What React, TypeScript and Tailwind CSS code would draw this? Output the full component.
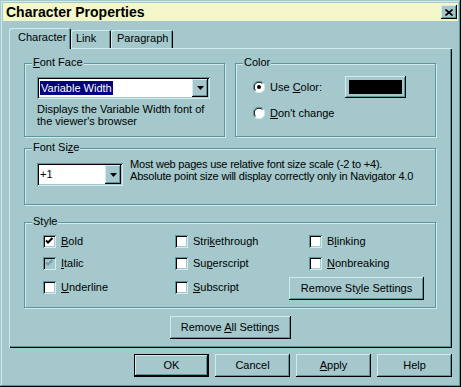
import type { ReactNode } from 'react'

// win95 bevels, teal scheme
const raised = 'bg-[#a4c8cc] shadow-[inset_-1px_-1px_#000,inset_1px_1px_#d0ecee,inset_-2px_-2px_#5a969c]'
const sunken = 'shadow-[inset_1px_1px_#5a969c,inset_-1px_-1px_#d0ecee,inset_2px_2px_#000,inset_-2px_-2px_#a4c8cc]'

function Btn({ children, className = '', isDefault = false }: { children: ReactNode; className?: string; isDefault?: boolean }) {
  return (
    <div className={`h-[23px] flex items-center justify-center ${raised} ${isDefault ? 'border border-black' : ''} ${className}`}>
      <span>{children}</span>
    </div>
  )
}

function Arrow() {
  return (
    <svg width="7" height="4" viewBox="0 0 7 4">
      <polygon points="0,0 7,0 3.5,4" fill="#000" />
    </svg>
  )
}

function Combo({ className, children }: { className: string; children: ReactNode }) {
  return (
    <div className={`bg-white flex p-[2px] ${sunken} ${className}`}>
      <div className="flex-1 flex items-center pl-[1px]">{children}</div>
      <div className={`w-[16px] flex items-center justify-center ${raised}`}>
        <Arrow />
      </div>
    </div>
  )
}

function Group({ label, className, children }: { label: ReactNode; className: string; children: ReactNode }) {
  return (
    <div className={`relative border border-[#5a969c] shadow-[inset_1px_1px_#d0ecee,1px_1px_#d0ecee] ${className}`}>
      <span className="absolute -top-[8px] left-[7px] px-[1px] bg-[#a4c8cc] leading-[13px]">{label}</span>
      {children}
    </div>
  )
}

function Radio({ checked }: { checked?: boolean }) {
  return (
    <svg width="12" height="12" viewBox="0 0 12 12" className="shrink-0">
      <circle cx="6" cy="6" r="5.5" fill="#fff" />
      <path d="M10.2 1.8 A5.5 5.5 0 0 0 1.8 10.2" stroke="#5a969c" fill="none" />
      <path d="M9.4 2.6 A4.7 4.7 0 0 0 2.6 9.4" stroke="#000" fill="none" />
      <path d="M1.8 10.2 A5.5 5.5 0 0 0 10.2 1.8" stroke="#d0ecee" fill="none" />
      {checked && <circle cx="6" cy="6" r="2" fill="#000" />}
    </svg>
  )
}

function Check({ label, checked, disabled, className = '' }: { label: ReactNode; checked?: boolean; disabled?: boolean; className?: string }) {
  return (
    <div className={`flex items-center gap-[5px] h-[13px] ${className}`}>
      <div className={`w-[13px] h-[13px] shrink-0 ${disabled ? 'bg-[#a4c8cc]' : 'bg-white'} ${sunken}`}>
        {checked && (
          <svg width="13" height="13" viewBox="0 0 13 13">
            <polyline points="3,5.5 5,7.5 9.5,3" fill="none" stroke={disabled ? '#6aa2a8' : '#000'} strokeWidth="2" />
          </svg>
        )}
      </div>
      <span className="leading-[13px] whitespace-nowrap">{label}</span>
    </div>
  )
}

export default function App() {
  return (
    <div className="w-[461px] h-[387px] bg-[#a4c8cc] p-[3px] flex flex-col text-black text-[11px] leading-[13px] font-['Liberation_Sans',Arial,sans-serif] shadow-[inset_-1px_-1px_#000,inset_1px_1px_#a4c8cc,inset_-2px_-2px_#5a969c,inset_2px_2px_#d0ecee]">
      {/* title bar */}
      <div className="h-[18px] bg-[#f4f8c8] flex items-center justify-between pl-[3px] pr-[1px]">
        <span className="text-[14px] font-bold leading-[16px]">Character Properties</span>
        <div className={`w-[16px] h-[14px] flex items-center justify-center ${raised}`}>
          <svg width="8" height="7" viewBox="0 0 8 7">
            <path d="M0.5 0.5 L7.5 6.5 M7.5 0.5 L0.5 6.5" stroke="#000" strokeWidth="1.6" />
          </svg>
        </div>
      </div>

      {/* tabs */}
      <div className="mt-[7px] pl-[6px] h-[20px] flex items-end">
        <div className="relative z-10 -mb-[1px] w-[62px] h-[21px] pt-[3px] pl-[9px] bg-[#a4c8cc] rounded-t-[2px] shadow-[inset_1px_1px_#d0ecee,inset_-1px_0_#000,inset_-2px_0_#5a969c]">
          Character
        </div>
        <div className="w-[40px] h-[18px] pt-[2px] pl-[5px] rounded-t-[2px] shadow-[inset_1px_1px_#d0ecee,inset_-1px_0_#000,inset_-2px_0_#5a969c]">
          Link
        </div>
        <div className="w-[62px] h-[18px] pt-[2px] pl-[6px] rounded-t-[2px] shadow-[inset_1px_1px_#d0ecee,inset_-1px_0_#000,inset_-2px_0_#5a969c]">
          Paragraph
        </div>
      </div>

      {/* tab page */}
      <div className="mx-[6px] h-[300px] pl-[15px] pt-[15px] shadow-[inset_1px_1px_#d0ecee,inset_-1px_-1px_#000,inset_-2px_-2px_#5a969c]">
        <div className="flex gap-[10px]">
          <Group label={<><u>F</u>ont Face</>} className="w-[201px] h-[74px]">
            <div className="pl-[12px] pt-[13px]">
              <Combo className="w-[173px] h-[22px]">
                <span className="bg-[#000080] text-white px-[1px] leading-[14px]">Variable Width</span>
              </Combo>
              <div className="mt-[4px] leading-[12px] whitespace-nowrap">
                Displays the Variable Width font of
                <br />
                the viewer's browser
              </div>
            </div>
          </Group>
          <Group label="Color" className="w-[201px] h-[74px]">
            <div className="pl-[17px] pt-[12px]">
              <div className="h-[22px] flex items-center">
                <Radio checked />
                <span className="ml-[5px] w-[75px]">
                  Use <u>C</u>olor:
                </span>
                <div className={`w-[61px] h-[22px] p-[4px] ${raised}`}>
                  <div className="w-full h-full bg-black" />
                </div>
              </div>
              <div className="mt-[4px] h-[22px] flex items-center">
                <Radio />
                <span className="ml-[5px]">
                  <u>D</u>on't change
                </span>
              </div>
            </div>
          </Group>
        </div>

        <Group label={<>Font Si<u>z</u>e</>} className="mt-[11px] w-[412px] h-[57px]">
          <div className="pl-[12px] pt-[9px] flex items-start">
            <Combo className="mt-[5px] w-[86px] h-[23px]">
              <span>+1</span>
            </Combo>
            <div className="ml-[7px] leading-[12px] whitespace-nowrap tracking-[-0.2px]">
              Most web pages use relative font size scale (-2 to +4).
              <br />
              Absolute point size will display correctly only in Navigator 4.0
            </div>
          </div>
        </Group>

        <Group label="Style" className="mt-[17px] w-[412px] h-[86px]">
          <div className="flex pl-[18px] pt-[12px]">
            <div className="w-[132px] flex flex-col">
              <Check checked label={<><u>B</u>old</>} />
              <Check checked disabled className="mt-[9px]" label={<><u>I</u>talic</>} />
              <Check className="mt-[11px]" label={<><u>U</u>nderline</>} />
            </div>
            <div className="w-[114px] flex flex-col">
              <Check label={<>Stri<u>k</u>ethrough</>} />
              <Check className="mt-[9px]" label={<>Su<u>p</u>erscript</>} />
              <Check className="mt-[11px]" label={<><u>S</u>ubscript</>} />
            </div>
            <div className="flex flex-col">
              <Check className="ml-[20px]" label={<>B<u>l</u>inking</>} />
              <Check className="ml-[20px] mt-[9px]" label={<><u>N</u>onbreaking</>} />
              <Btn className="mt-[7px] w-[135px]">
                Remove St<u>y</u>le Settings
              </Btn>
            </div>
          </div>
        </Group>

        <div className="w-[412px] flex justify-center mt-[8px]">
          <Btn className="w-[121px]">
            Remove <u>A</u>ll Settings
          </Btn>
        </div>
      </div>

      {/* dialog buttons */}
      <div className="mt-[6px] mr-[6px] flex justify-end gap-[6px]">
        <Btn isDefault className="w-[75px]">OK</Btn>
        <Btn className="w-[75px]">Cancel</Btn>
        <Btn className="w-[75px]">
          <u>A</u>pply
        </Btn>
        <Btn className="w-[75px]">Help</Btn>
      </div>
    </div>
  )
}
